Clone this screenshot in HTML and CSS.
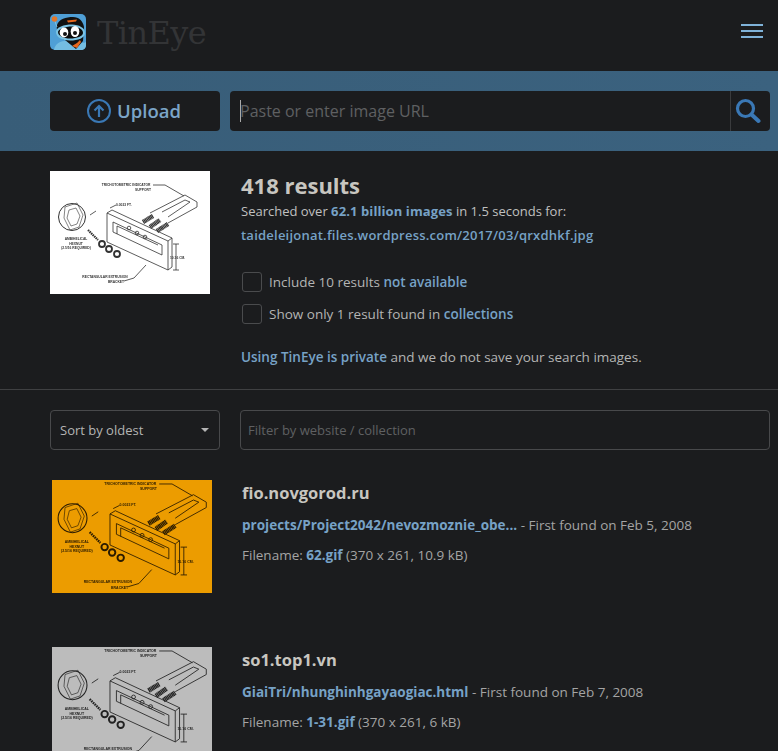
FILE: index.html
```html
<!DOCTYPE html>
<html lang="en">
<head>
  <meta charset="UTF-8" />
  <meta name="viewport" content="width=device-width, initial-scale=1.0"/>
  <title>TinEye search results</title>
  <link rel="stylesheet" href="styles.css">
</head>
<body>
  <header class="topbar">
    <a class="logo" href="#">
      <svg class="logo-icon" width="36" height="36" viewBox="0 0 36 36">
        <rect width="36" height="36" rx="5" fill="#4f9fd6"/>
        <path d="M4 36C5 29 12 26 20 27 28 28 33 30 36 28V31C36 34 34 36 31 36Z" fill="#74bde2"/>
        <path d="M7 11C9 5 16 3 23 3 29 3 33 7 34 13L33 27 26 35 15 26C9 25 6 18 7 11Z" fill="#111"/>
        <path d="M17 6.500 27 5.500 26 7.500 18 8.500Z" fill="#e8671c"/>
        <path d="M6 18C6 13 14 10.500 22 10.500 29 10.500 35 14 35 19 35 24 28 26.500 20 26.500 12 26.500 6 23 6 18Z" fill="#7cc4e4"/>
        <path d="M8 18C8 15 15 12.500 22 12.500 28 12.500 33 15 33 19 33 22 27 24.500 20 24.500 14 24.500 8 22 8 18Z" fill="#0c0c0c"/>
        <ellipse cx="14" cy="18.500" rx="4.300" ry="5" fill="#fff"/>
        <ellipse cx="25" cy="17.500" rx="4.300" ry="5.500" fill="#fff"/>
        <circle cx="15" cy="20" r="2" fill="#111"/>
        <circle cx="25" cy="19" r="2" fill="#111"/>
        <path d="M22 32 27 29 30 26 31 28 27 34Z" fill="#e8671c"/>
        <path d="M4.500 6 7 13" stroke="#7cc4e4" stroke-width="1"/>
        <circle cx="4.500" cy="5" r="2.800" fill="#e2762a"/>
      </svg>
      <span class="logo-text">TinEye</span>
    </a>
    <button class="menu-btn" aria-label="Menu"><span></span><span></span><span></span></button>
  </header>

  <section class="search-band">
    <button class="upload-btn">
      <svg width="24" height="24" viewBox="0 0 24 24" fill="none" stroke="#3a78b5" stroke-width="2">
        <circle cx="12" cy="12" r="11"/>
        <path d="M12 18V7M7.500 11.500 12 7 16.500 11.500" stroke-width="2.200"/>
      </svg>
      <span class="upload-label">Upload</span>
    </button>
    <div class="url-box">
      <div class="url-input"><span class="caret"></span>Paste or enter image URL</div>
      <button class="search-btn" aria-label="Search">
        <svg width="26" height="26" viewBox="0 0 26 26" fill="none" stroke="#3a78b5">
          <circle cx="10.500" cy="10.500" r="8" stroke-width="3.200"/>
          <path d="M16.500 16.500 23.500 23" stroke-width="4" stroke-linecap="round"/>
        </svg>
      </button>
    </div>
  </section>

  <section class="summary">
    <svg class="query-img" viewBox="0 0 160 123" preserveAspectRatio="none">
      <g id="diagram">
        <g fill="none" stroke="currentColor" stroke-width="0.8">
          <path d="M57 42 118 70V99L57 71Z"/>
          <path d="M57 42 62 39 122 67 118 70M122 67V96L118 99"/>
          <path d="M63 51 112 74V84L63 61Z"/>
          <path d="M67 55 108 74M67 55V63"/>
          <path d="M100 42 135 24 147 31V36L118 52"/>
          <path d="M112 41 135 29 140 31 118 46"/>
          <circle cx="22" cy="46" r="13.500" stroke-width="1"/>
          <path d="M15 36 27 32 33 44 29 56 20 59 14 47Z" stroke-width="0.600"/>
          <path d="M19 39 26 37 30 45 27 53 21 55 17 47Z" stroke-width="0.600"/>
          <circle cx="52" cy="73" r="3" stroke-width="1.800"/>
          <circle cx="59" cy="78" r="3" stroke-width="1.800"/>
          <circle cx="67" cy="83" r="3" stroke-width="1.800"/>
          <circle cx="79" cy="57" r="1.800"/>
          <circle cx="87" cy="62" r="1.800"/>
          <circle cx="95" cy="66" r="1.800"/>
          <path d="M103 14 115 14 134 25M66 34 60 37M74 110 84 107 96 94M126 73V99M123 73H129M123 99H129M40 44 46 40"/>
        </g>
        <g fill="none" stroke="currentColor">
          <path d="M93 51 103 45M100 56 110 49M107 60 118 53" stroke-width="4.500" stroke-dasharray="1.200 .3"/>
          <path d="M38 59 48 69" stroke-width="2.200" stroke-dasharray="1.500 .7"/>
        </g>
        <g class="diagram-text" fill="currentColor">
          <text x="76" y="15" text-anchor="middle">TRICHOTOMETRIC INDICATOR</text>
          <text x="93" y="20" text-anchor="middle">SUPPORT</text>
          <text x="66" y="35">0.0023 FT.</text>
          <text x="26" y="69" text-anchor="middle">AMBIHELICAL</text>
          <text x="26" y="73.500" text-anchor="middle">HEXNUT</text>
          <text x="26" y="78" text-anchor="middle">(2.5/16 REQUIRED)</text>
          <text x="55" y="107" text-anchor="middle">RECTANGULAR EXTRUSION</text>
          <text x="66" y="112" text-anchor="middle">BRACKET</text>
          <text x="120" y="88">10.16 CM.</text>
        </g>
      </g>
    </svg>
    <div class="summary-text">
      <h1>418 results</h1>
      <p class="searched">Searched over <a href="#">62.1 billion images</a> in 1.5 seconds for:</p>
      <p class="query-url"><a href="#">taideleijonat.files.wordpress.com/2017/03/qrxdhkf.jpg</a></p>
      <label class="check"><span class="box"></span>Include 10 results&nbsp;<a href="#">not available</a></label>
      <label class="check"><span class="box"></span>Show only 1 result found in&nbsp;<a href="#">collections</a></label>
      <p class="private"><a href="#">Using TinEye is private</a> and we do not save your search images.</p>
    </div>
  </section>

  <section class="filters">
    <div class="sort">Sort by oldest<span class="arrow"></span></div>
    <div class="filter-input">Filter by website / collection</div>
  </section>

  <section class="results">
    <div class="result">
      <svg class="result-img orange" viewBox="0 0 160 113" preserveAspectRatio="none"><use href="#diagram" transform="translate(-3 -11) scale(1.07)"/></svg>
      <div class="result-text">
        <h2>fio.novgorod.ru</h2>
        <p class="found"><a href="#">projects/Project2042/nevozmoznie_obe...</a> - First found on Feb 5, 2008</p>
        <p class="filename">Filename: <a href="#">62.gif</a> (370 x 261, 10.9 kB)</p>
      </div>
    </div>
    <div class="result result-last">
      <svg class="result-img gray" viewBox="0 0 160 113" preserveAspectRatio="none"><use href="#diagram" transform="translate(-3 -11) scale(1.07)"/></svg>
      <div class="result-text">
        <h2>so1.top1.vn</h2>
        <p class="found"><a href="#">GiaiTri/nhunghinhgayaogiac.html</a> - First found on Feb 7, 2008</p>
        <p class="filename">Filename: <a href="#">1-31.gif</a> (370 x 261, 6 kB)</p>
      </div>
    </div>
  </section>
</body>
</html>
```

FILE: styles.css
```css
html, body {
  height: 751px;
  overflow: hidden;
}
body {
  font-family: 'Open Sans', sans-serif;
  background-color: #1b1c1e;
  color: #b4b4b4;
  margin: 0;
  font-size: 13px;
}
a {
  color: #77a2c6;
  font-weight: 600;
  text-decoration: none;
}
p, h1, h2 {
  margin: 0;
}
.diagram-text {
  font-family: 'Liberation Sans', sans-serif;
  font-size: 3.300px;
  font-weight: bold;
}

.topbar {
  height: 71px;
  padding: 0 15px 0 50px;
  display: flex;
  align-items: center;
  justify-content: space-between;
  box-sizing: border-box;
}
.logo {
  display: flex;
  align-items: center;
  margin-top: -8px;
}
.logo-icon {
  display: block;
}
.logo-text {
  font-family: 'DejaVu Serif', serif;
  font-weight: 400;
  font-size: 32px;
  letter-spacing: -0.6px;
  color: #333436;
  margin: 2px 0 0 11px;
}
.menu-btn {
  background: none;
  border: none;
  padding: 0;
  width: 22px;
  display: flex;
  flex-direction: column;
  gap: 4px;
  margin-top: -9px;
}
.menu-btn span {
  display: block;
  height: 2px;
  background-color: #7fb2d8;
}

.search-band {
  height: 80px;
  padding: 20px 8px 20px 50px;
  box-sizing: border-box;
  background: linear-gradient(to right, #385d78, #3b627f);
  display: flex;
  gap: 10px;
}
.upload-btn {
  width: 170px;
  height: 40px;
  background-color: #1b1c1e;
  border: none;
  border-radius: 4px;
  color: #7ba5c8;
  font-family: inherit;
  font-size: 18.500px;
  font-weight: 600;
  display: flex;
  align-items: center;
  justify-content: center;
  gap: 6px;
  padding: 0 2px 0 0;
}
.upload-label {
  margin-top: -2px;
}
.url-box {
  flex: 1;
  height: 40px;
  background-color: #1b1c1e;
  border-radius: 4px;
  display: flex;
}
.url-input {
  flex: 1;
  padding-left: 10px;
  display: flex;
  align-items: center;
  font-size: 16px;
  color: #5f6062;
}
.caret {
  width: 1px;
  height: 22px;
  background-color: #aaa;
  margin-right: -1px;
}
.search-btn {
  width: 40px;
  background: none;
  border: none;
  border-left: 1px solid #3a3b3d;
  padding: 0 5px 0 0;
  display: flex;
  align-items: center;
  justify-content: center;
}

.summary {
  height: 239px;
  padding: 20px 0 0 50px;
  box-sizing: border-box;
  border-bottom: 1px solid #3f4042;
  display: flex;
}
.query-img {
  width: 160px;
  height: 123px;
  background-color: #fff;
  color: #333;
  flex-shrink: 0;
  filter: blur(0.4px);
}
.summary-text {
  margin-left: 31px;
}
h1 {
  font-size: 22px;
  font-weight: 700;
  line-height: 30px;
  margin-top: -1px;
  color: #c8c6c0;
}
.searched {
  line-height: 20px;
  margin-top: 1px;
  color: #c0c0c0;
}
.searched a {
  font-weight: 700;
  letter-spacing: 0.1px;
}
.query-url {
  line-height: 20px;
  margin-top: 4px;
}
.query-url a {
  letter-spacing: 0.23px;
}
.check {
  display: flex;
  align-items: center;
  height: 20px;
  margin-top: 12px;
  font-size: 13.500px;
}
.query-url + .check {
  margin-top: 27px;
}
.box {
  width: 18px;
  height: 18px;
  border: 1px solid #4a4b4d;
  border-radius: 3px;
  margin: 0 7px 0 1px;
}
.private {
  line-height: 20px;
  margin-top: 23px;
  font-size: 13.500px;
}

.filters {
  padding: 20px 8px 0 50px;
  display: flex;
  gap: 20px;
}
.sort, .filter-input {
  height: 40px;
  box-sizing: border-box;
  border: 1px solid #48494b;
  border-radius: 4px;
  display: flex;
  align-items: center;
}
.sort {
  width: 170px;
  padding: 0 10px 0 9px;
  justify-content: space-between;
  color: #b4b4b4;
}
.arrow {
  width: 0;
  height: 0;
  border-left: 4px solid transparent;
  border-right: 4px solid transparent;
  border-top: 4px solid #b4b4b4;
}
.filter-input {
  flex: 1;
  padding-left: 7px;
  color: #5f6062;
}

.results {
  padding: 30px 0 0 52px;
}
.result {
  display: flex;
  height: 167px;
}
.result-last {
  height: 104px;
  overflow: hidden;
}
.result-img {
  width: 160px;
  height: 113px;
  flex-shrink: 0;
  filter: blur(0.4px);
}
.orange {
  background-color: #ec9c00;
  color: #2a1b00;
}
.gray {
  background-color: #bcbcbc;
  color: #222;
}
.result-text {
  margin-left: 30px;
}
h2 {
  font-size: 16.500px;
  font-weight: 700;
  line-height: 26px;
  color: #c8c6c0;
}
.found, .filename {
  line-height: 20px;
  font-size: 13.500px;
  color: #a4a4a4;
}
.found {
  margin-top: 9px;
}
.filename {
  margin-top: 10px;
}
.found a, .filename a {
  font-weight: 700;
}
```
